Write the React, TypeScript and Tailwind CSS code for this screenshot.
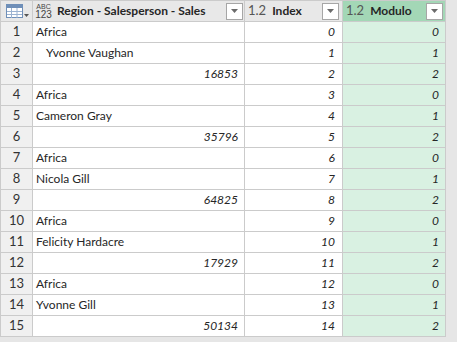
type Row = { text?: string; indent?: boolean; sales?: number; index: number };

const rows: Row[] = [
  { text: "Africa", index: 0 },
  { text: "Yvonne Vaughan", indent: true, index: 1 },
  { sales: 16853, index: 2 },
  { text: "Africa", index: 3 },
  { text: "Cameron Gray", index: 4 },
  { sales: 35796, index: 5 },
  { text: "Africa", index: 6 },
  { text: "Nicola Gill", index: 7 },
  { sales: 64825, index: 8 },
  { text: "Africa", index: 9 },
  { text: "Felicity Hardacre", index: 10 },
  { sales: 17929, index: 11 },
  { text: "Africa", index: 12 },
  { text: "Yvonne Gill", index: 13 },
  { sales: 50134, index: 14 },
];

const cols = "grid grid-cols-[31px_211px_97px_102px]";

function FilterButton() {
  return (
    <div className="w-[17px] h-[17px] bg-white border border-[#a6a6a6] flex items-center justify-center">
      <svg width="7" height="4" viewBox="0 0 7 4">
        <path d="M0 0h7L3.5 4z" fill="#6b6b6b" />
      </svg>
    </div>
  );
}

function TableIcon() {
  return (
    <div className="flex items-end gap-[1px]">
      <svg width="17" height="14" viewBox="0 0 17 14">
        <rect x="0.5" y="0.5" width="16" height="13" fill="#fff" stroke="#6f8fb8" />
        <rect x="1" y="1" width="15" height="3" fill="#6f8fb8" />
        <path d="M1 7.5h15M1 10.5h15M5.5 4v10M11 4v10" stroke="#9bb2d1" />
      </svg>
      <svg width="5" height="3" viewBox="0 0 5 3" className="mb-[1px]">
        <path d="M0 0h5L2.5 3z" fill="#555" />
      </svg>
    </div>
  );
}

export default function App() {
  return (
    <div className="w-[457px] h-[342px] bg-[#e6e6e6] text-[#262626] text-[12px] font-['Lato',sans-serif] overflow-hidden">
      <div className="w-[446px] flex flex-col gap-y-px bg-[#cbcbcb] border border-[#cbcbcb]">
        <div className={`${cols} h-[20px] gap-x-px`}>
          <div className="bg-[#e8e8e8] flex items-center justify-center pl-[2px]">
            <TableIcon />
          </div>
          <div className="bg-[#e8e8e8] flex items-center pl-[2px] pr-[1px]">
            <div className="flex flex-col items-center w-[17px] text-[#444] font-['Liberation_Sans',sans-serif]">
              <span className="text-[7px] leading-[7px]">ABC</span>
              <span className="text-[10px] leading-[10px]">123</span>
            </div>
            <span className="ml-[5px] font-bold text-[12px] whitespace-nowrap flex-1">
              Region - Salesperson - Sales
            </span>
            <FilterButton />
          </div>
          <div className="bg-[#e8e8e8] flex items-center pl-[3px] pr-[3px]">
            <span className="text-[13px] text-[#555]">1.2</span>
            <span className="ml-[6px] font-bold flex-1">Index</span>
            <FilterButton />
          </div>
          <div className="bg-[#a3d7b6] flex items-center pl-[3px] pr-[2px]">
            <span className="text-[13px] text-[#555]">1.2</span>
            <span className="ml-[6px] font-bold flex-1">Modulo</span>
            <FilterButton />
          </div>
        </div>
        {rows.map((r, i) => (
          <div key={i} className={`${cols} h-[20px] gap-x-px`}>
            <div className="bg-[#f0f0f0] flex items-center justify-center text-[13px] text-[#333]">
              {i + 1}
            </div>
            <div className="bg-white flex items-center px-[3px]">
              {r.text ? (
                <span className={r.indent ? "pl-[10px]" : ""}>{r.text}</span>
              ) : (
                <span className="ml-auto italic pr-[3px]">{r.sales}</span>
              )}
            </div>
            <div className="bg-white flex items-center justify-end italic pr-[7px]">
              {r.index}
            </div>
            <div className="bg-[#d9f1e2] flex items-center justify-end italic pr-[6px]">
              {r.index % 3}
            </div>
          </div>
        ))}
      </div>
    </div>
  );
}
